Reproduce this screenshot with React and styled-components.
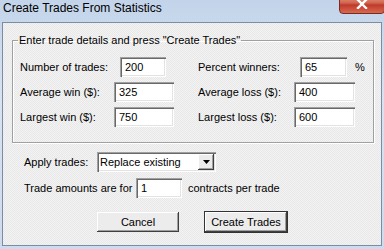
import React from "react";
import styled, { createGlobalStyle } from "styled-components";

const GlobalStyle = createGlobalStyle`
  html, body {
    margin: 0;
    padding: 0;
    width: 384px;
    height: 249px;
    overflow: hidden;
  }
  body {
    font-family: "Liberation Sans", Arial, sans-serif;
    font-size: 11px;
    color: #000;
  }
`;

const Window = styled.div`
  width: 384px;
  height: 249px;
  display: flex;
  flex-direction: column;
  background: linear-gradient(#c3d4ea, #d7e3f2 40%, #cddbee);
  overflow: hidden;
`;

const TitleBar = styled.div`
  height: 22px;
  display: flex;
  align-items: flex-start;
  justify-content: space-between;
  padding-left: 3px;
`;

const Title = styled.span`
  font-size: 12px;
  line-height: 17px;
  color: #000;
`;

const CloseButton = styled.div`
  width: 44px;
  height: 18px;
  margin-top: -6px;
  margin-right: -1px;
  border: 1px solid #7a2a22;
  border-radius: 0 0 4px 4px;
  background: linear-gradient(#e8a493, #d0634c 45%, #c0392b 55%, #d66a50);
  display: flex;
  align-items: center;
  justify-content: center;
`;

const Panel = styled.div`
  flex: 1;
  margin: 0 2px 3px 2px;
  border: 1px solid #7d8ca2;
  background: repeating-conic-gradient(#f3f3f3 0 25%, #e8e8e8 0 50%) 0 0 / 2px 2px;
  display: flex;
  flex-direction: column;
`;

const GroupBox = styled.fieldset`
  margin: 11px 0 0 9px;
  width: 362px;
  box-sizing: border-box;
  padding: 10px 7px 15px 7px;
  border: 1px solid #a0a0a0;
  box-shadow: inset 1px 1px 0 #fff, 1px 1px 0 #fff;
`;

const Legend = styled.legend`
  padding: 0 1px;
  margin-left: -2px;
  line-height: 13px;
`;

const FieldGrid = styled.div`
  display: grid;
  grid-template-columns: 178px 1fr;
  row-gap: 5px;
`;

const Field = styled.div`
  display: flex;
  align-items: center;
  height: 20px;
`;

const Label = styled.span`
  width: ${(p) => p.$w}px;
  flex: none;
  white-space: nowrap;
`;

const TextBox = styled.div`
  width: ${(p) => p.$w}px;
  height: 20px;
  box-sizing: border-box;
  flex: none;
  background: #fff;
  padding-left: 5px;
  display: flex;
  align-items: center;
  box-shadow: inset 1px 1px 0 #a0a0a0, inset 2px 2px 0 #696969,
    inset -1px -1px 0 #fff, inset -2px -2px 0 #e3e3e3;
`;

const Unit = styled.span`
  margin-left: 8px;
`;

const Row = styled.div`
  display: flex;
  align-items: center;
  height: 20px;
  padding-left: 21px;
  margin-top: ${(p) => p.$top}px;
`;

const After = styled.span`
  margin-left: 6px;
`;

const Combo = styled.div`
  width: 119px;
  height: 20px;
  box-sizing: border-box;
  display: flex;
  background: #fff;
  padding: 2px;
  box-shadow: inset 1px 1px 0 #a0a0a0, inset 2px 2px 0 #696969,
    inset -1px -1px 0 #fff, inset -2px -2px 0 #e3e3e3;
`;

const ComboText = styled.span`
  flex: 1;
  padding-left: 1px;
  display: flex;
  align-items: center;
`;

const ComboArrow = styled.div`
  width: 16px;
  background: #ececec;
  display: flex;
  align-items: center;
  justify-content: center;
  box-shadow: inset -1px -1px 0 #404040, inset 1px 1px 0 #fff,
    inset -2px -2px 0 #a0a0a0;
`;

const ButtonRow = styled.div`
  display: flex;
  justify-content: center;
  gap: 24px;
  margin-top: 13px;
`;

const Button = styled.button`
  width: 84px;
  height: 22px;
  box-sizing: border-box;
  font: inherit;
  color: #000;
  padding: 0;
  background: #ececec;
  border: 1px solid ${(p) => (p.$primary ? "#333" : "transparent")};
  box-shadow: inset -1px -1px 0 #404040, inset 1px 1px 0 #fff,
    inset -2px -2px 0 #a0a0a0;
`;

export default function App() {
  return (
    <>
      <GlobalStyle />
      <Window>
        <TitleBar>
          <Title>Create Trades From Statistics</Title>
          <CloseButton>
            <svg width="12" height="10" viewBox="0 0 12 10">
              <path d="M2 1 L10 9 M10 1 L2 9" stroke="#fff" strokeWidth="2.4" strokeLinecap="square" />
            </svg>
          </CloseButton>
        </TitleBar>
        <Panel>
          <GroupBox>
            <Legend>Enter trade details and press "Create Trades"</Legend>
            <FieldGrid>
              <Field>
                <Label $w={100}>Number of trades:</Label>
                <TextBox $w={46}>200</TextBox>
              </Field>
              <Field>
                <Label $w={102}>Percent winners:</Label>
                <TextBox $w={47}>65</TextBox>
                <Unit>%</Unit>
              </Field>
              <Field>
                <Label $w={94}>Average win ($):</Label>
                <TextBox $w={60}>325</TextBox>
              </Field>
              <Field>
                <Label $w={96}>Average loss ($):</Label>
                <TextBox $w={61}>400</TextBox>
              </Field>
              <Field>
                <Label $w={94}>Largest win ($):</Label>
                <TextBox $w={60}>750</TextBox>
              </Field>
              <Field>
                <Label $w={96}>Largest loss ($):</Label>
                <TextBox $w={61}>600</TextBox>
              </Field>
            </FieldGrid>
          </GroupBox>
          <Row $top={9}>
            <Label $w={73}>Apply trades:</Label>
            <Combo>
              <ComboText>Replace existing</ComboText>
              <ComboArrow>
                <svg width="7" height="4" viewBox="0 0 7 4">
                  <path d="M0 0 H7 L3.5 4 Z" fill="#000" />
                </svg>
              </ComboArrow>
            </Combo>
          </Row>
          <Row $top={6}>
            <Label $w={112}>Trade amounts are for</Label>
            <TextBox $w={46}>1</TextBox>
            <After>contracts per trade</After>
          </Row>
          <ButtonRow>
            <Button>Cancel</Button>
            <Button $primary>Create Trades</Button>
          </ButtonRow>
        </Panel>
      </Window>
    </>
  );
}
